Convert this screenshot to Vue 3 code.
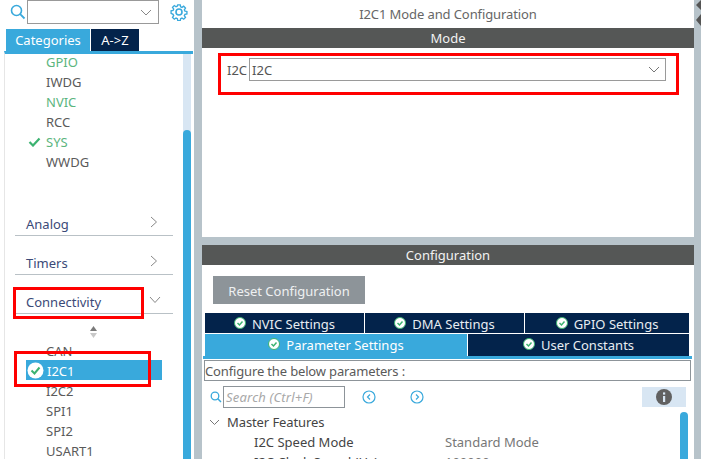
<script setup>
const topItems = [
  { label: 'GPIO', green: true },
  { label: 'IWDG' },
  { label: 'NVIC', green: true },
  { label: 'RCC' },
  { label: 'SYS', green: true, check: true },
  { label: 'WWDG' },
]
const bottomItems = ['I2C2', 'SPI1', 'SPI2', 'USART1']
const groups = ['Analog', 'Timers']
const upperTabs = ['NVIC Settings', 'DMA Settings', 'GPIO Settings']
</script>

<template>
  <div class="app">
    <aside class="side">
      <div class="tools">
        <svg class="lens" width="16" height="16" viewBox="0 0 16 16"><circle cx="6.5" cy="6.5" r="5" fill="none" stroke="#39a9dc" stroke-width="1.6"/><path d="M10.2 10.2 14.5 14.5" stroke="#39a9dc" stroke-width="1.8"/></svg>
        <div class="combo">
          <svg width="12" height="7" viewBox="0 0 12 7"><path d="M1 1l5 5 5-5" fill="none" stroke="#888" stroke-width="1"/></svg>
        </div>
        <svg class="gear" width="18" height="18" viewBox="0 0 18 18"><circle cx="9" cy="9" r="3" fill="none" stroke="#39a9dc" stroke-width="1.6"/><path d="M7.6 1h2.8l.4 2.2 1.5.7 1.9-1.3 2 2-1.3 1.9.7 1.5 2.2.4v2.8l-2.2.4-.7 1.5 1.3 1.9-2 2-1.9-1.3-1.5.7-.4 2.2H7.6l-.4-2.2-1.5-.7-1.9 1.3-2-2 1.3-1.9-.7-1.5L.2 10.4V7.6l2.2-.4.7-1.5-1.3-1.9 2-2 1.9 1.3 1.5-.7z" fill="none" stroke="#39a9dc" stroke-width="1.5" transform="translate(.9 .9) scale(.9)"/></svg>
      </div>
      <div class="side-tabs">
        <span class="side-tab on">Categories</span>
        <span class="side-tab">A-&gt;Z</span>
      </div>
      <div class="tree">
        <div class="tree-scroll">
          <div class="tree-main">
            <div class="tree-inner">
              <div v-for="it in topItems" :key="it.label" class="leaf" :class="{ green: it.green }">
                <svg v-if="it.check" class="tick" width="13" height="10" viewBox="0 0 13 10"><path d="M1.5 5l3.5 3.5L11.5 1.5" fill="none" stroke="#3cb371" stroke-width="2.2"/></svg>
                {{ it.label }}
              </div>
              <div class="spacer"></div>
              <div v-for="g in groups" :key="g" class="group">
                <span>{{ g }}</span>
                <svg width="8" height="12" viewBox="0 0 8 12"><path d="M1 1l5.5 5L1 11" fill="none" stroke="#888" stroke-width="1"/></svg>
              </div>
              <div class="group">
                <span>Connectivity</span>
                <svg class="open" width="12" height="8" viewBox="0 0 12 8"><path d="M1 1l5 5.5L11 1" fill="none" stroke="#888" stroke-width="1"/></svg>
              </div>
              <div class="sorter">
                <svg width="9" height="12" viewBox="0 0 9 12"><path d="M4.5 0 8 5H1z" fill="#7a7a7a"/><path d="M4.5 12 8 7H1z" fill="#c8c8c8"/></svg>
              </div>
              <div class="leaf">CAN</div>
              <div class="leaf selected">
                <svg class="round" width="17" height="17" viewBox="0 0 17 17"><circle cx="8.5" cy="8.5" r="8" fill="#fff"/><path d="M4.5 8.5l3 3 5-6" fill="none" stroke="#3cb371" stroke-width="2"/></svg>
                I2C1
              </div>
              <div v-for="b in bottomItems" :key="b" class="leaf">{{ b }}</div>
            </div>
          </div>
          <div class="track"><div class="thumb"></div></div>
        </div>
      </div>
    </aside>

    <main class="main">
      <section class="mode">
        <h1 class="title">I2C1 Mode and Configuration</h1>
        <div class="bar">Mode</div>
        <div class="mode-row">
          <span>I2C</span>
          <div class="mode-select">
            <span>I2C</span>
            <svg width="12" height="7" viewBox="0 0 12 7"><path d="M1 1l5 5 5-5" fill="none" stroke="#777" stroke-width="1"/></svg>
          </div>
        </div>
      </section>

      <section class="config">
        <div class="bar">Configuration</div>
        <button class="reset">Reset Configuration</button>
        <div class="tabs upper">
          <div v-for="t in upperTabs" :key="t" class="tab">
            <svg class="ok" width="12" height="12" viewBox="0 0 12 12"><circle cx="6" cy="6" r="5.5" fill="#fff" stroke="#3cb371" stroke-width="1"/><path d="M3.5 6l2 2 3-3.5" fill="none" stroke="#3cb371" stroke-width="1.5"/></svg>
            {{ t }}
          </div>
        </div>
        <div class="tabs lower">
          <div class="tab active">
            <svg class="ok" width="12" height="12" viewBox="0 0 12 12"><circle cx="6" cy="6" r="5.5" fill="#fff" stroke="#3cb371" stroke-width="1"/><path d="M3.5 6l2 2 3-3.5" fill="none" stroke="#3cb371" stroke-width="1.5"/></svg>
            Parameter Settings
          </div>
          <div class="tab">
            <svg class="ok" width="12" height="12" viewBox="0 0 12 12"><circle cx="6" cy="6" r="5.5" fill="#fff" stroke="#3cb371" stroke-width="1"/><path d="M3.5 6l2 2 3-3.5" fill="none" stroke="#3cb371" stroke-width="1.5"/></svg>
            User Constants
          </div>
        </div>
        <div class="tab-rule"></div>
        <div class="hint">Configure the below parameters :</div>
        <div class="finder">
          <svg class="find-lens" width="12" height="12" viewBox="0 0 12 12"><circle cx="5" cy="5" r="3.8" fill="none" stroke="#39a9dc" stroke-width="1.3"/><path d="M7.8 7.8 11 11" stroke="#39a9dc" stroke-width="1.5"/></svg>
          <div class="find-input">Search (Ctrl+F)</div>
          <svg class="nav first" width="14" height="14" viewBox="0 0 14 14"><circle cx="7" cy="7" r="6" fill="none" stroke="#39a9dc" stroke-width="1.2"/><path d="M8 4.5 5.5 7 8 9.5" fill="none" stroke="#39a9dc" stroke-width="1.2"/></svg>
          <svg class="nav second" width="14" height="14" viewBox="0 0 14 14"><circle cx="7" cy="7" r="6" fill="none" stroke="#39a9dc" stroke-width="1.2"/><path d="M6 4.5 8.5 7 6 9.5" fill="none" stroke="#39a9dc" stroke-width="1.2"/></svg>
          <div class="info">
            <svg width="16" height="16" viewBox="0 0 16 16"><circle cx="8" cy="8" r="8" fill="#616161"/><rect x="7" y="7" width="2.2" height="6" fill="#d8e6f3"/><rect x="7" y="3.4" width="2.2" height="2.2" fill="#d8e6f3"/></svg>
          </div>
        </div>
        <div class="params">
          <div class="param-body">
            <div class="param-head">
              <svg width="11" height="7" viewBox="0 0 11 7"><path d="M1 1l4.5 4.5L10 1" fill="none" stroke="#777" stroke-width="1"/></svg>
              Master Features
            </div>
            <div class="param"><span class="k">I2C Speed Mode</span><span class="v">Standard Mode</span></div>
            <div class="param"><span class="k">I2C Clock Speed (Hz)</span><span class="v">100000</span></div>
          </div>
          <div class="param-thumb"></div>
        </div>
      </section>
    </main>

    <svg class="edge" width="7" height="28" viewBox="0 0 7 28"><path d="M7 0 2 5l5 5zM7 14l-5 6 5 6z" fill="#555"/></svg>

    <div class="mark m1"></div>
    <div class="mark m2"></div>
    <div class="mark m3"></div>
  </div>
</template>

<style>
html, body { margin: 0; padding: 0; background: #b7c3ca; }
</style>

<style scoped>
.app {
  position: relative;
  width: 701px;
  height: 459px;
  overflow: hidden;
  display: flex;
  background: #b7c3ca;
  font-family: "Noto Sans", "Open Sans", sans-serif;
  font-size: 13px;
  color: #555;
}
.side {
  width: 194px;
  height: 459px;
  flex: none;
  background: #fff;
  overflow: hidden;
}
.tools {
  display: flex;
  align-items: center;
  height: 24px;
}
.lens { margin-left: 10px; flex: none; }
.combo {
  width: 124px;
  height: 22px;
  margin-left: 1px;
  border: 1px solid #999;
  display: flex;
  align-items: center;
  justify-content: flex-end;
  padding-right: 6px;
  box-sizing: content-box;
}
.gear { margin-left: 11px; }
.side-tabs {
  display: flex;
  gap: 1px;
  margin: 5px 0 0 6px;
  height: 22px;
}
.side-tab {
  width: 48px;
  background: #03234b;
  color: #fff;
  text-align: center;
  line-height: 22px;
}
.side-tab.on { width: 84px; background: #39a9dc; }
.tree {
  width: 189px;
  margin-left: 4px;
  border-top: 3px solid #39a9dc;
  border-left: 1px solid #e6e6e6;
  box-sizing: border-box;
}
.tree-scroll { display: flex; height: 408px; }
.tree-main { width: 178px; flex: none; overflow: hidden; }
.tree-inner { margin-top: -2px; }
.track {
  width: 8px;
  height: 408px;
  background: #d8e6f3;
  position: relative;
}
.thumb {
  margin-top: 76px;
  height: 332px;
  background: #39a9dc;
  border-radius: 4px 4px 0 0;
}
.leaf {
  position: relative;
  height: 20px;
  line-height: 20px;
  padding-left: 41px;
  color: #5a5a5a;
}
.leaf.green { color: #5bb57e; }
.tick { position: absolute; left: 23px; top: 5px; }
.spacer { height: 25px; }
.group {
  display: flex;
  justify-content: space-between;
  align-items: center;
  margin: 0 10px;
  height: 39px;
  box-sizing: border-box;
  padding: 15px 15px 0 11px;
  border-bottom: 1px solid #b9c1c6;
  color: #3b4a78;
}
.group svg { margin-top: -3px; }
.group .open { margin-right: -3px; }
.sorter {
  height: 27px;
  padding: 12px 0 0 84px;
  box-sizing: border-box;
  line-height: 0;
}
.leaf.selected {
  width: 136px;
  margin-left: 21px;
  padding-left: 21px;
  box-sizing: border-box;
  color: #fff;
  z-index: 0;
}
.leaf.selected::before {
  content: "";
  position: absolute;
  left: 0;
  top: -1px;
  width: 100%;
  height: 20px;
  background: #39a9dc;
  z-index: -1;
}
.round { position: absolute; left: 1px; top: 1px; }
.main {
  width: 492px;
  margin-left: 8px;
  flex: none;
  display: flex;
  flex-direction: column;
  gap: 8px;
}
.mode { height: 237px; background: #fff; flex: none; }
.title {
  margin: 0;
  height: 28px;
  line-height: 28px;
  font-size: 13px;
  font-weight: 400;
  text-align: center;
  color: #666;
  letter-spacing: -.1px;
}
.bar {
  height: 20px;
  line-height: 21px;
  background: #555756;
  color: #f2f2f2;
  text-align: center;
}
.mode-row {
  display: flex;
  align-items: center;
  gap: 2px;
  margin: 10px 0 0 25px;
}
.mode-select {
  width: 417px;
  height: 23px;
  box-sizing: border-box;
  border: 1px solid #9a9a9a;
  display: flex;
  align-items: center;
  justify-content: space-between;
  padding: 0 5px 0 2px;
}
.config {
  flex: 1;
  background: #fff;
  overflow: hidden;
}
.reset {
  display: block;
  width: 152px;
  height: 28px;
  margin: 11px 0 0 11px;
  padding: 1px 0 0;
  border: 0;
  background: #8d9499;
  color: #eef0f1;
  font: inherit;
}
.tabs { display: flex; gap: 1px; margin-left: 3px; width: 484px; }
.upper { margin-top: 9px; height: 20px; }
.lower { margin-top: 1px; height: 22px; }
.tab {
  flex: 1;
  background: #03234b;
  color: #e8edf2;
  display: flex;
  align-items: center;
  justify-content: center;
  gap: 6px;
}
.upper .tab { padding-top: 1px; box-sizing: border-box; }
.upper .tab:last-child { flex: none; width: 164px; }
.upper .tab:not(:last-child) { flex: none; width: 159px; }
.lower .tab { flex: none; width: 221px; }
.lower .tab.active { width: 262px; background: #39a9dc; color: #fff; }
.ok { flex: none; margin-top: -2px; }
.tab-rule { height: 3px; margin: 0 2px 0 1px; background: #39a9dc; }
.hint {
  margin: 1px 3px 0 2px;
  height: 21px;
  line-height: 20px;
  box-sizing: border-box;
  border: 1px solid #8d9499;
  padding-left: 0;
  color: #5a5a5a;
  white-space: nowrap;
  letter-spacing: -.15px;
}
.finder {
  display: flex;
  align-items: center;
  height: 22px;
  margin-top: 5px;
  padding-left: 8px;
}
.find-input {
  width: 122px;
  height: 22px;
  margin-left: 1px;
  box-sizing: border-box;
  border: 1px solid #8d9499;
  padding-left: 2px;
  line-height: 20px;
  font-style: italic;
  color: #a8a8a8;
  flex: none;
  letter-spacing: .2px;
}
.nav.first { margin-left: 17px; }
.nav.second { margin-left: 34px; }
.info {
  width: 44px;
  height: 20px;
  margin-left: 218px;
  background: #d8e6f3;
  display: flex;
  align-items: center;
  justify-content: center;
}
.params { position: relative; height: 60px; }
.param-body { padding-top: 4px; }
.param-head {
  display: flex;
  align-items: center;
  gap: 7px;
  height: 20px;
  padding-left: 7px;
  color: #444;
  letter-spacing: -.1px;
}
.param {
  display: flex;
  height: 20px;
  line-height: 20px;
  padding-left: 52px;
}
.k { width: 191px; color: #444; }
.v { color: #777; }
.param-thumb {
  position: absolute;
  left: 478px;
  top: 4px;
  width: 8px;
  height: 60px;
  background: #39a9dc;
  border-radius: 4px 4px 0 0;
}
.edge { position: absolute; right: 0; top: 0; }
.mark { position: absolute; box-sizing: border-box; border: 3px solid #f00; }
.m1 { left: 218px; top: 53px; width: 461px; height: 42px; }
.m2 { left: 13px; top: 287px; width: 131px; height: 32px; }
.m3 { left: 14px; top: 351px; width: 137px; height: 36px; }
</style>
